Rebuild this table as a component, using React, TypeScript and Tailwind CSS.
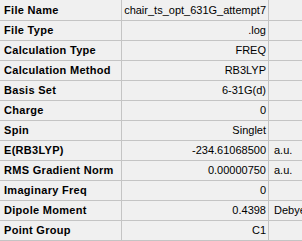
const rows: { label: string; value: string; unit?: string }[] = [
  { label: 'File Name', value: 'chair_ts_opt_631G_attempt7' },
  { label: 'File Type', value: '.log' },
  { label: 'Calculation Type', value: 'FREQ' },
  { label: 'Calculation Method', value: 'RB3LYP' },
  { label: 'Basis Set', value: '6-31G(d)' },
  { label: 'Charge', value: '0' },
  { label: 'Spin', value: 'Singlet' },
  { label: 'E(RB3LYP)', value: '-234.61068500', unit: 'a.u.' },
  { label: 'RMS Gradient Norm', value: '0.00000750', unit: 'a.u.' },
  { label: 'Imaginary Freq', value: '0' },
  { label: 'Dipole Moment', value: '0.4398', unit: 'Debye' },
  { label: 'Point Group', value: 'C1' },
];

export default function App() {
  return (
    <div className="h-[241px] w-[302px] overflow-hidden bg-[#f0f0f0] font-['Liberation_Sans',Arial,sans-serif] text-[11px] text-black">
      {rows.map((row, i) => (
        <div
          key={row.label}
          className={`flex border-b border-[#c4c4c4] ${i === 0 ? 'h-[21px]' : 'h-[20px]'}`}
        >
          <div className="flex w-[122px] shrink-0 items-center border-r border-[#c4c4c4] pl-[4px] font-bold tracking-[0.3px]">
            {row.label}
          </div>
          <div className="flex w-[147px] shrink-0 items-center justify-end whitespace-nowrap border-r border-[#c4c4c4] pr-[2px]">
            {row.value}
          </div>
          <div className="flex min-w-0 flex-1 items-center overflow-hidden whitespace-nowrap pl-[5px]">
            {row.unit}
          </div>
        </div>
      ))}
    </div>
  );
}
